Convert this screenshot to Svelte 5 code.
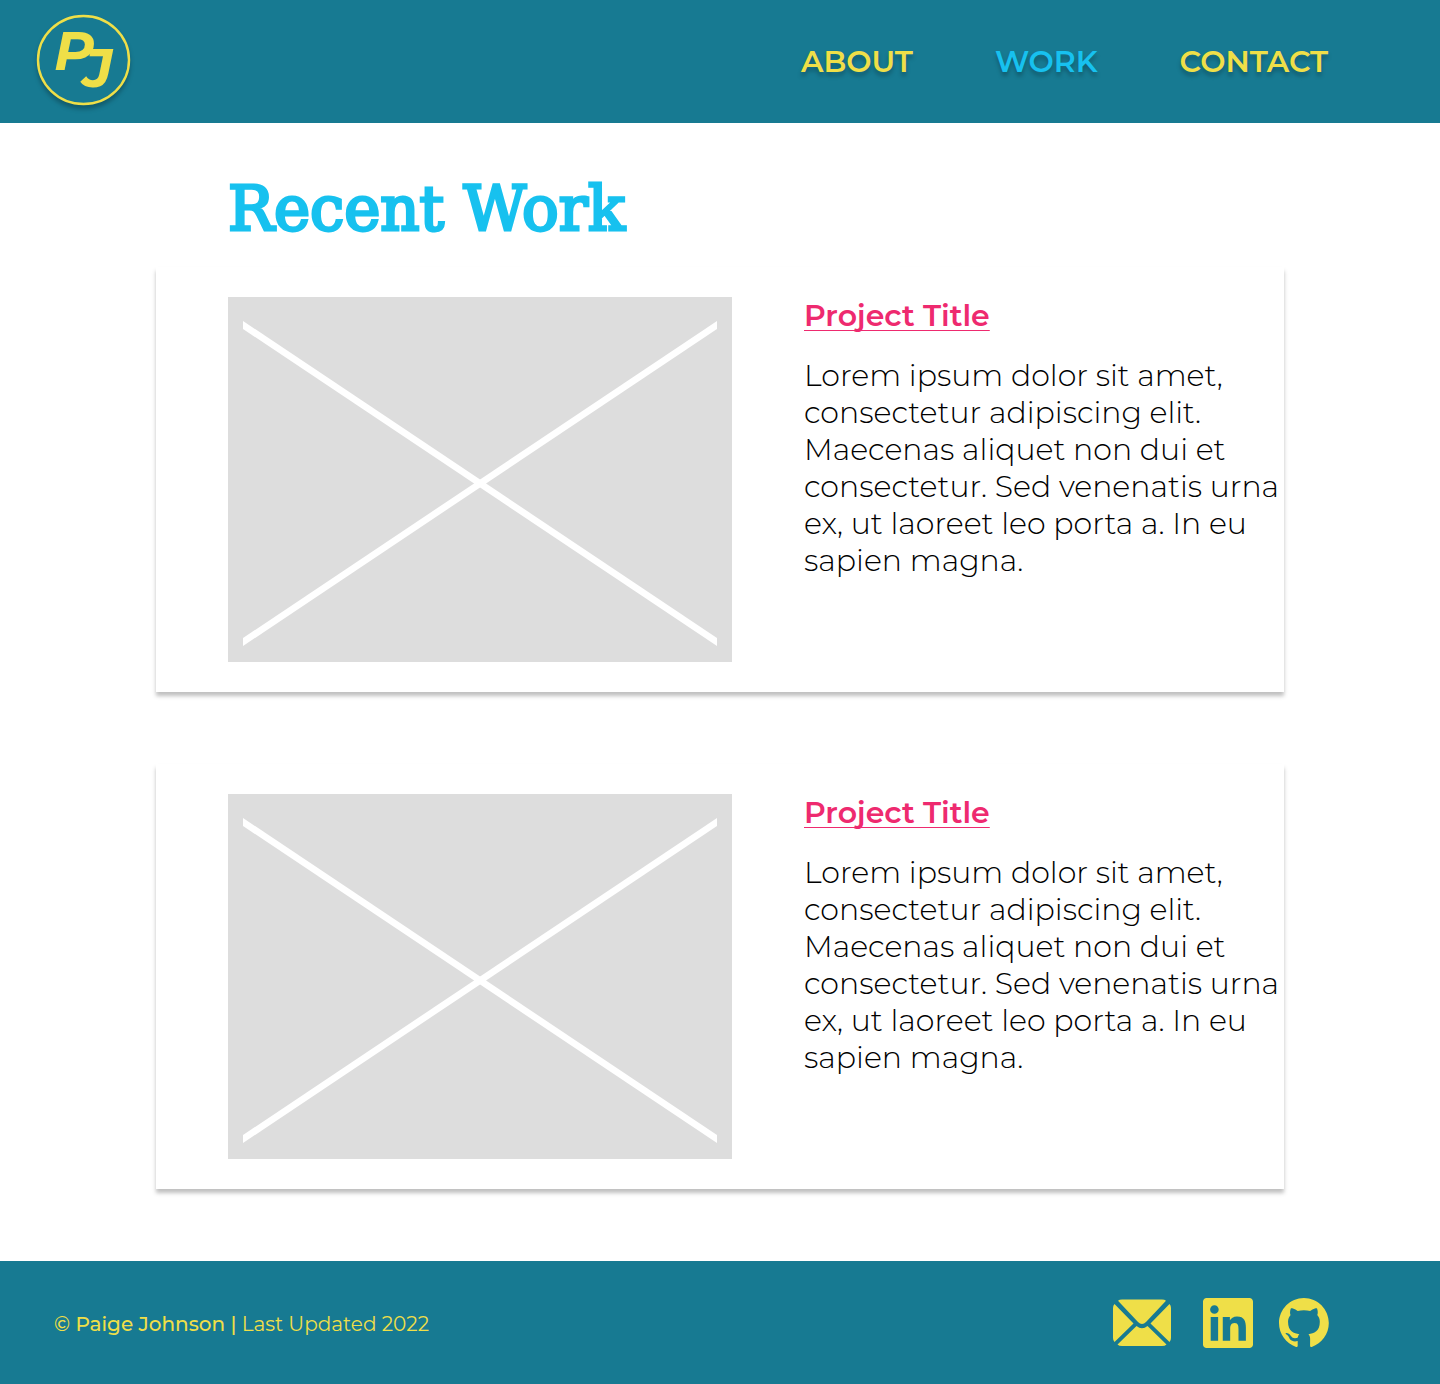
<script>
  const links = [
    { label: 'ABOUT', href: '#about', current: false },
    { label: 'WORK', href: '#work', current: true },
    { label: 'CONTACT', href: '#contact', current: false },
  ];

  const text =
    'Lorem ipsum dolor sit amet, consectetur adipiscing elit. Maecenas aliquet non dui et consectetur. Sed venenatis urna ex, ut laoreet leo porta a. In eu sapien magna.';

  const projects = [
    { id: 1, title: 'Project Title', text },
    { id: 2, title: 'Project Title', text },
  ];
</script>

<header class="bar top">
  <a class="logo" href="#home" aria-label="Home">
    <svg width="94" height="92" viewBox="0 0 94 92">
      <ellipse cx="46.500" cy="46" rx="45.500" ry="44" />
      <text x="17" y="56">P<tspan x="46" y="73">J</tspan></text>
    </svg>
  </a>
  <nav>
    {#each links as link}
      <a href={link.href} class:current={link.current} aria-current={link.current ? 'page' : undefined}>{link.label}</a>
    {/each}
  </nav>
</header>

<main>
  <h1>Recent Work</h1>
  <div class="projects">
    {#each projects as project (project.id)}
      <article>
        <svg class="thumb" viewBox="0 0 504 365" role="img" aria-label="Project preview">
          <rect width="504" height="365" fill="#DDDDDD" />
          <path d="M15 24L489 341V349L15 32Z" fill="#fff" />
          <path d="M489 24L15 341V349L489 32Z" fill="#fff" />
        </svg>
        <div class="info">
          <h2><a href="#project-{project.id}">{project.title}</a></h2>
          <p>{project.text}</p>
        </div>
      </article>
    {/each}
  </div>
</main>

<footer class="bar bottom">
  <p><strong>© Paige Johnson |</strong> Last Updated 2022</p>
  <div class="social">
    <a href="#email" aria-label="Email">
      <svg width="58" height="48" viewBox="0 0 58 48">
        <path d="M5 1.800Q6.500 .5 9 .5H49Q51.500 .5 53 1.800L33 23Q29 27 25 23Z" />
        <path d="M1.500 5L20.500 24.500L1.500 43Q0 41.500 0 39V9Q0 6.500 1.500 5ZM56.500 5L37.500 24.500L56.500 43Q58 41.500 58 39V9Q58 6.500 56.500 5Z" />
        <path d="M4.500 45.500L23.500 27Q29 31.500 34.500 27L53.500 45.500Q52 47 49 47H9Q6 47 4.500 45.500Z" />
      </svg>
    </a>
    <a href="#linkedin" aria-label="LinkedIn">
      <svg width="50" height="50" viewBox="0 32 448 448">
        <path d="M416 32H31.900C14.300 32 0 46.500 0 64.300v383.400C0 465.500 14.300 480 31.900 480H416c17.600 0 32-14.500 32-32.300V64.300c0-17.800-14.400-32.300-32-32.300zM135.400 416H69V202.200h66.500V416zm-33.200-243c-21.300 0-38.500-17.300-38.500-38.500S80.900 96 102.200 96c21.200 0 38.500 17.300 38.500 38.500 0 21.300-17.200 38.500-38.500 38.500zm282.100 243h-66.400V312c0-24.800-.5-56.700-34.500-56.700-34.600 0-39.900 27-39.900 54.900V416h-66.400V202.200h63.700v29.200h.9c8.900-16.800 30.600-34.500 62.900-34.500 67.200 0 79.700 44.300 79.700 101.900V416z" />
      </svg>
    </a>
    <a href="#github" aria-label="GitHub">
      <svg width="50" height="50" viewBox="0 0 98 98">
        <path fill-rule="evenodd" d="M48.854 0C21.839 0 0 22 0 49.217c0 21.756 13.993 40.172 33.405 46.690 2.427.490 3.316-1.059 3.316-2.362 0-1.141-.080-5.052-.080-9.127-13.590 2.934-16.420-5.867-16.420-5.867-2.184-5.704-5.420-7.170-5.420-7.170-4.448-3.015.324-3.015.324-3.015 4.934.326 7.523 5.052 7.523 5.052 4.367 7.496 11.404 5.378 14.235 4.074.404-3.178 1.699-5.378 3.074-6.600-10.839-1.141-22.243-5.378-22.243-24.283 0-5.378 1.940-9.778 5.014-13.200-.485-1.222-2.184-6.275.486-13.038 0 0 4.125-1.304 13.426 5.052a46.970 46.970 0 0 1 12.214-1.630c4.125 0 8.330.571 12.213 1.630 9.302-6.356 13.427-5.052 13.427-5.052 2.670 6.763.970 11.816.485 13.038 3.155 3.422 5.015 7.822 5.015 13.200 0 18.905-11.404 23.060-22.324 24.283 1.780 1.548 3.316 4.481 3.316 9.126 0 6.600-.080 11.897-.080 13.526 0 1.304.890 2.853 3.316 2.364 19.412-6.520 33.405-24.935 33.405-46.691C97.707 22 75.788 0 48.854 0z" />
      </svg>
    </a>
  </div>
</footer>

<style>
  :global(body) {
    margin: 0;
    background: #fff;
    font-family: Montserrat, Inter, sans-serif;
  }

  .bar {
    box-sizing: border-box;
    display: flex;
    align-items: center;
    justify-content: space-between;
    min-height: 123px;
    background: #177a92;
    color: #efdf48;
  }

  .top {
    padding: 0 112px 0 37px;
  }

  .logo svg {
    display: block;
    margin-bottom: 3px;
    overflow: visible;
  }

  .logo ellipse {
    fill: #177a92;
    stroke: #efdf48;
    stroke-width: 2.4;
    filter: drop-shadow(0 4px 2px rgba(0, 0, 0, 0.25));
  }

  .logo text {
    fill: #efdf48;
    font: italic 700 55px Montserrat, Inter, sans-serif;
  }

  nav {
    display: flex;
    gap: 82px;
  }

  nav a {
    color: #efdf48;
    font-size: 30px;
    font-weight: 600;
    line-height: 37px;
    text-decoration: none;
    text-shadow: 0 4px 4px rgba(0, 0, 0, 0.25);
  }

  nav a.current {
    color: #17c1ef;
  }

  main {
    padding: 44px 156px 72px;
  }

  h1 {
    margin: 0 0 16px;
    padding-left: 72px;
    color: #17c1ef;
    font-family: 'Roboto Slab', 'DejaVu Serif', serif;
    font-size: 61px;
    font-weight: 400;
    line-height: 84px;
    -webkit-text-stroke: 3px #17c1ef;
  }

  .projects {
    display: grid;
    gap: 72px;
  }

  article {
    display: grid;
    grid-template-columns: 504fr 480fr;
    column-gap: 72px;
    align-items: start;
    padding: 30px 0 30px 72px;
    background: #fff;
    box-shadow: 0 4px 4px rgba(0, 0, 0, 0.25);
  }

  .thumb {
    display: block;
    width: 100%;
  }

  h2 {
    margin: 0 0 23px;
    font-size: 30px;
    font-weight: 600;
    line-height: 37px;
  }

  h2 a {
    color: #ee2a6f;
    text-decoration-thickness: 1px;
    text-underline-offset: 4px;
    text-decoration-skip-ink: none;
  }

  .info p {
    margin: 0;
    color: #000;
    font-size: 30px;
    font-weight: 300;
    line-height: 37px;
  }

  .bottom {
    padding: 0 111px 0 54px;
  }

  .bottom p {
    margin: 0;
    padding-top: 3px;
    font-size: 20px;
    line-height: 24px;
  }

  strong {
    font-weight: 500;
  }

  .social {
    display: flex;
    align-items: center;
    gap: 26px;
  }

  .social a:first-child {
    margin-right: 6px;
  }

  .social svg {
    display: block;
    fill: #efdf48;
  }
</style>
